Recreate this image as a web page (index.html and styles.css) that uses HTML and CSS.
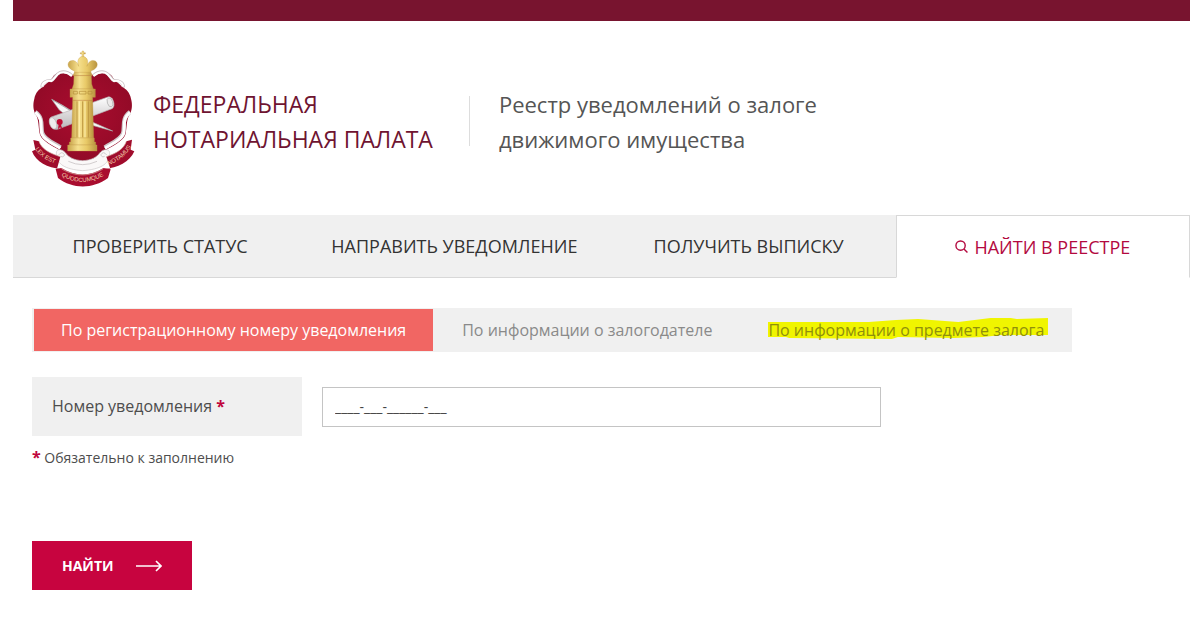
FILE: index.html
```html
<!DOCTYPE html>
<html lang="ru">
<head>
<meta charset="utf-8">
<meta name="viewport" content="width=device-width, initial-scale=1">
<title>Реестр уведомлений о залоге движимого имущества</title>
<link rel="stylesheet" href="styles.css">
</head>
<body>
<div class="page">
  <div class="topbar"></div>
  <header class="header">
    <svg class="emblem" viewBox="36 30 309 411" role="img" aria-label="Герб Федеральной нотариальной палаты">
      <defs>
        <linearGradient id="gold" x1="0" x2="1" y1="0" y2="0">
          <stop offset="0" stop-color="#c9a54b"/>
          <stop offset=".35" stop-color="#f6e08e"/>
          <stop offset=".65" stop-color="#e8c967"/>
          <stop offset="1" stop-color="#b8933f"/>
        </linearGradient>
        <linearGradient id="paper" x1="0" x2="0" y1="0" y2="1">
          <stop offset="0" stop-color="#ffffff"/>
          <stop offset="1" stop-color="#b9b6b8"/>
        </linearGradient>
        <radialGradient id="field" cx=".5" cy=".45" r=".6">
          <stop offset="0" stop-color="#ab0c2f"/>
          <stop offset="1" stop-color="#8f0a26"/>
        </radialGradient>
        <path id="motto-left" d="M42 322 Q62 358 118 375"/>
        <path id="motto-mid" d="M119 404 Q188 450 266 398"/>
        <path id="motto-right" d="M262 377 Q318 356 339 310"/>
      </defs>
      <path d="M100 108 C116 92 136 96 150 104 L226 104 C240 96 260 92 276 108 C282 122 296 128 306 140 C318 146 330 158 333 176 C338 194 336 210 330 222 C318 238 322 262 316 284 C308 304 280 316 258 330 C240 352 214 364 188 368 C162 364 136 352 118 330 C96 316 68 304 60 284 C54 262 58 238 46 222 C40 210 38 194 43 176 C46 158 58 146 70 140 C80 128 94 122 100 108Z" fill="url(#field)"/>
      <path d="M66 142 C64 128 80 120 94 122 C104 118 106 102 120 97 C134 93 146 98 156 107 M310 142 C312 128 296 120 282 122 C272 118 270 102 256 97 C242 93 230 98 220 107" fill="none" stroke="#ccc4c7" stroke-width="9"/>
      <path d="M67 140 C66 128 80 121 94 123 C105 118 107 103 121 98 C134 94 146 99 156 108 M309 140 C310 128 296 121 282 123 C271 118 269 103 255 98 C242 94 230 99 220 108" fill="none" stroke="#fff" stroke-width="6"/>
      <path d="M46 216 C74 236 60 262 68 282 C78 302 100 308 122 322 M330 216 C302 236 316 262 308 282 C298 302 276 308 254 322" fill="none" stroke="#cfc6c9" stroke-width="12"/>
      <path d="M46 217 C72 237 58 263 66 283 C76 304 100 311 121 325 M330 217 C304 237 318 263 310 283 C300 304 276 311 255 325" fill="none" stroke="#fff" stroke-width="9"/>
      <path d="M95 178 L128 196 L160 216 L205 241 L278 273 L210 254 L146 232 L118 210Z" fill="#f7f7f7" stroke="#aaa" stroke-width="2"/>
      <path d="M97 179 L164 220" stroke="#999" stroke-width="2"/>
      <path d="M94 231 L264 171 C279 166 289 200 276 206 L112 268 C94 272 80 238 94 231Z" fill="url(#paper)" stroke="#b5b0b2" stroke-width="2"/>
      <ellipse cx="99" cy="250" rx="10" ry="18" transform="rotate(-20 99 250)" fill="#eeecec" stroke="#bcb5b7" stroke-width="2"/>
      <ellipse cx="270" cy="187" rx="8" ry="14" transform="rotate(-18 270 187)" fill="#eceaea" stroke="#aaa" stroke-width="2"/>
      <circle cx="119" cy="246" r="9" fill="#c00a31"/>
      <path d="M116 252 L114 268 L120 262 L127 268 L122 251Z" fill="#c00a31"/>
      <g fill="url(#gold)" stroke="#c19c48" stroke-width="1">
        <path d="M162 92 C144 87 139 71 150 63 C162 57 174 67 176 79 C169 61 178 50 188 49 C199 50 208 61 201 79 C203 67 215 57 226 63 C237 71 232 87 214 92 L211 99 L165 99Z"/>
        <path d="M186 33 H191 V38 H196 V42 H191 V50 H186 V42 H181 V38 H186Z"/>
        <path d="M163 97 H213 L217 107 H159Z"/>
        <path d="M162 107 H214 L215 132 L220 147 H156 L161 132Z"/>
        <path d="M150 147 H226 V172 H218 V181 H158 V172 H150Z"/>
        <path d="M158 181 H218 L221 294 H155Z"/>
        <path d="M152 294 H223 V306 H227 V315 H148 V306 H152Z"/>
        <path d="M143 315 H231 V333 H143Z"/>
      </g>
      <path d="M171 184 V292 M188 184 V292 M205 184 V292" stroke="#bd9640" stroke-width="3"/>
      <path d="M178 184 V292 M195 184 V292" stroke="#fff0b0" stroke-width="3"/>
      <path d="M160 154 h12 v8 h-12z m18 0 h20 v8 h-20z m26 0 h12 v8 h-12z" fill="none" stroke="#b38e3a" stroke-width="2"/>
      <path d="M110 346 C104 326 124 324 136 338 C146 352 162 361 188 362 C214 361 230 352 240 338 C252 324 274 326 268 346 C266 372 242 388 188 392 C134 388 112 372 110 346Z" fill="#faf8f8" stroke="#ccc5c7" stroke-width="2"/>
      <path d="M116 345 q10-14 18 0 q-6 10-12 4 M260 345 q-10-14-18 0 q6 10 12 4 M145 364 Q188 384 231 364" fill="none" stroke="#bdb6b8" stroke-width="2"/>
      <path d="M40 300 L57 304 C64 326 88 340 121 350 L111 386 L122 386 C84 386 47 365 36 334 L46 329Z" fill="#a00c2c"/>
      <path d="M336 299 L319 304 C312 326 290 340 259 350 L271 386 L254 386 C292 386 330 365 343 334 L332 329Z" fill="#a00c2c"/>
      <path d="M107 387 L124 384 C164 410 212 410 250 384 L272 388 L264 414 C218 448 158 448 114 414Z" fill="#a90d2f"/>
      <path d="M57 304 C64 326 88 340 121 350 M319 304 C312 326 290 340 259 350 M124 386 C164 411 212 411 250 386" fill="none" stroke="#d8b4a5" stroke-width="2"/>
      <g class="motto">
        <text><textPath href="#motto-left" startOffset="6">LEX EST</textPath></text>
        <text><textPath href="#motto-mid" startOffset="6">QUODCUMQUE</textPath></text>
        <text><textPath href="#motto-right" startOffset="4">NOTAMUS</textPath></text>
      </g>
    </svg>
    <div class="org">ФЕДЕРАЛЬНАЯ<br>НОТАРИАЛЬНАЯ ПАЛАТА</div>
    <h1 class="title">Реестр уведомлений о залоге<br>движимого имущества</h1>
  </header>

  <nav class="nav">
    <a class="nav-item" href="#status">ПРОВЕРИТЬ СТАТУС</a>
    <a class="nav-item" href="#send">НАПРАВИТЬ УВЕДОМЛЕНИЕ</a>
    <a class="nav-item" href="#extract">ПОЛУЧИТЬ ВЫПИСКУ</a>
    <a class="nav-item nav-item-active" href="#search" aria-current="page">
      <svg class="nav-icon" viewBox="0 0 14 14" aria-hidden="true"><circle cx="6" cy="6" r="5"/><path d="M9.6 9.6 L13.4 13.4"/></svg>
      НАЙТИ В РЕЕСТРЕ
    </a>
  </nav>

  <main class="content">
    <div class="tabs">
      <button class="tab tab-active" type="button">По регистрационному номеру уведомления</button>
      <button class="tab" type="button">По информации о залогодателе</button>
      <button class="tab tab-marked" type="button">
        <svg class="marker" viewBox="0 0 280 22" preserveAspectRatio="none" aria-hidden="true"><path d="M1 4 L101 4 L128 2 L150 1 L190 4 L222 0 L242 0 L248 1 L279 0 V17 L232 17 L215 19 L185 20 L130 19 L124 21 L22 20 L19 19 L1 19Z"/></svg>
        <span class="tab-text">По информации о предмете залога</span>
      </button>
    </div>
    <form class="form">
      <div class="field">
        <label class="field-label" for="number">Номер уведомления <span class="required">*</span></label>
        <input class="field-input" id="number" type="text" value="____-___-______-___">
      </div>
      <p class="note"><span class="required">*</span> Обязательно к заполнению</p>
      <button class="submit" type="button">НАЙТИ
        <svg class="arrow" viewBox="0 0 26 12" aria-hidden="true"><path d="M0 6 H25 M20 1 L25 6 L20 11"/></svg>
      </button>
    </form>
  </main>
</div>
</body>
</html>
```
FILE: styles.css
```css
* {
  box-sizing: border-box;
}

body {
  margin: 0;
  background: #fff;
  color: #4d4d4d;
  font-family: "Open Sans", "Noto Sans", sans-serif;
}

.page {
  margin: 0 10px 0 13px;
}

.topbar {
  height: 21px;
  background: #78142f;
}

.header {
  display: flex;
  align-items: flex-start;
  padding: 29px 19px 28px;
}

.emblem {
  flex: none;
  width: 103px;
  height: 137px;
}

.motto {
  fill: #f3cda9;
  font-family: "Liberation Sans", sans-serif;
  font-size: 18px;
}

.org,
.title {
  margin: 37px 0 0;
  font-weight: 400;
  line-height: 35px;
}

.org {
  margin-left: 18px;
  color: #6f1431;
  font-size: 23px;
}

.title {
  position: relative;
  margin-left: 36px;
  padding-left: 30px;
  color: #555;
  font-size: 22px;
}

.title::before {
  content: "";
  position: absolute;
  top: 9px;
  bottom: 11px;
  left: 0;
  border-left: 1px solid #ddd;
}

.nav {
  display: grid;
  grid-template-columns: repeat(4, 1fr);
}

.nav-item {
  display: flex;
  align-items: center;
  justify-content: center;
  gap: 6px;
  height: 63px;
  border-bottom: 1px solid #d8d8d8;
  background: #f0f0f0;
  color: #333;
  font-size: 18px;
  font-weight: 500;
  text-decoration: none;
}

.nav-item-active {
  border: 1px solid #d8d8d8;
  border-bottom-color: #fff;
  background: #fff;
  color: #b3093f;
}

.nav-icon {
  width: 13px;
  height: 13px;
  fill: none;
  stroke: currentColor;
  stroke-width: 1.5;
}

.content {
  padding: 30px 19px 0;
}

.tabs {
  display: inline-flex;
  padding-left: 1px;
  background: #f0f0f0;
}

.tab {
  position: relative;
  height: 44px;
  padding: 0 27px;
  border: 1px solid #f0f0f0;
  background: #f0f0f0;
  color: #8a8a8a;
  font: 16px "Open Sans", "Noto Sans", sans-serif;
}

.tab-active {
  background: #f16663;
  color: #fff;
}

.tab-text {
  position: relative;
}

.tab-marked {
  color: #8f8f0c;
}

.marker {
  position: absolute;
  top: 9px;
  left: 26px;
  width: calc(100% - 48px);
  height: 22px;
  fill: #f0f500;
}

.form {
  margin-top: 25px;
}

.field {
  display: grid;
  grid-template-columns: 270px minmax(0, 559px);
  gap: 20px;
  align-items: center;
}

.field-label {
  padding: 18px 20px;
  background: #f0f0f0;
  font-size: 16px;
  line-height: 23px;
}

.required {
  color: #c0063c;
  font-weight: 700;
}

.field-input {
  width: 100%;
  height: 40px;
  padding: 0 12px;
  border: 1px solid #c4c4c4;
  color: #444;
  font: 14px "Open Sans", "Noto Sans", sans-serif;
}

.note {
  margin: 10px 0 72px;
  font-size: 14px;
  line-height: 23px;
}

.note .required {
  font-size: 16px;
}

.submit {
  display: inline-flex;
  align-items: center;
  gap: 22px;
  height: 49px;
  padding: 0 30px;
  border: 0;
  background: #c7043f;
  color: #fff;
  font: 700 14px "Open Sans", "Noto Sans", sans-serif;
}

.arrow {
  width: 26px;
  height: 12px;
  fill: none;
  stroke: currentColor;
  stroke-width: 1.6;
}
```
